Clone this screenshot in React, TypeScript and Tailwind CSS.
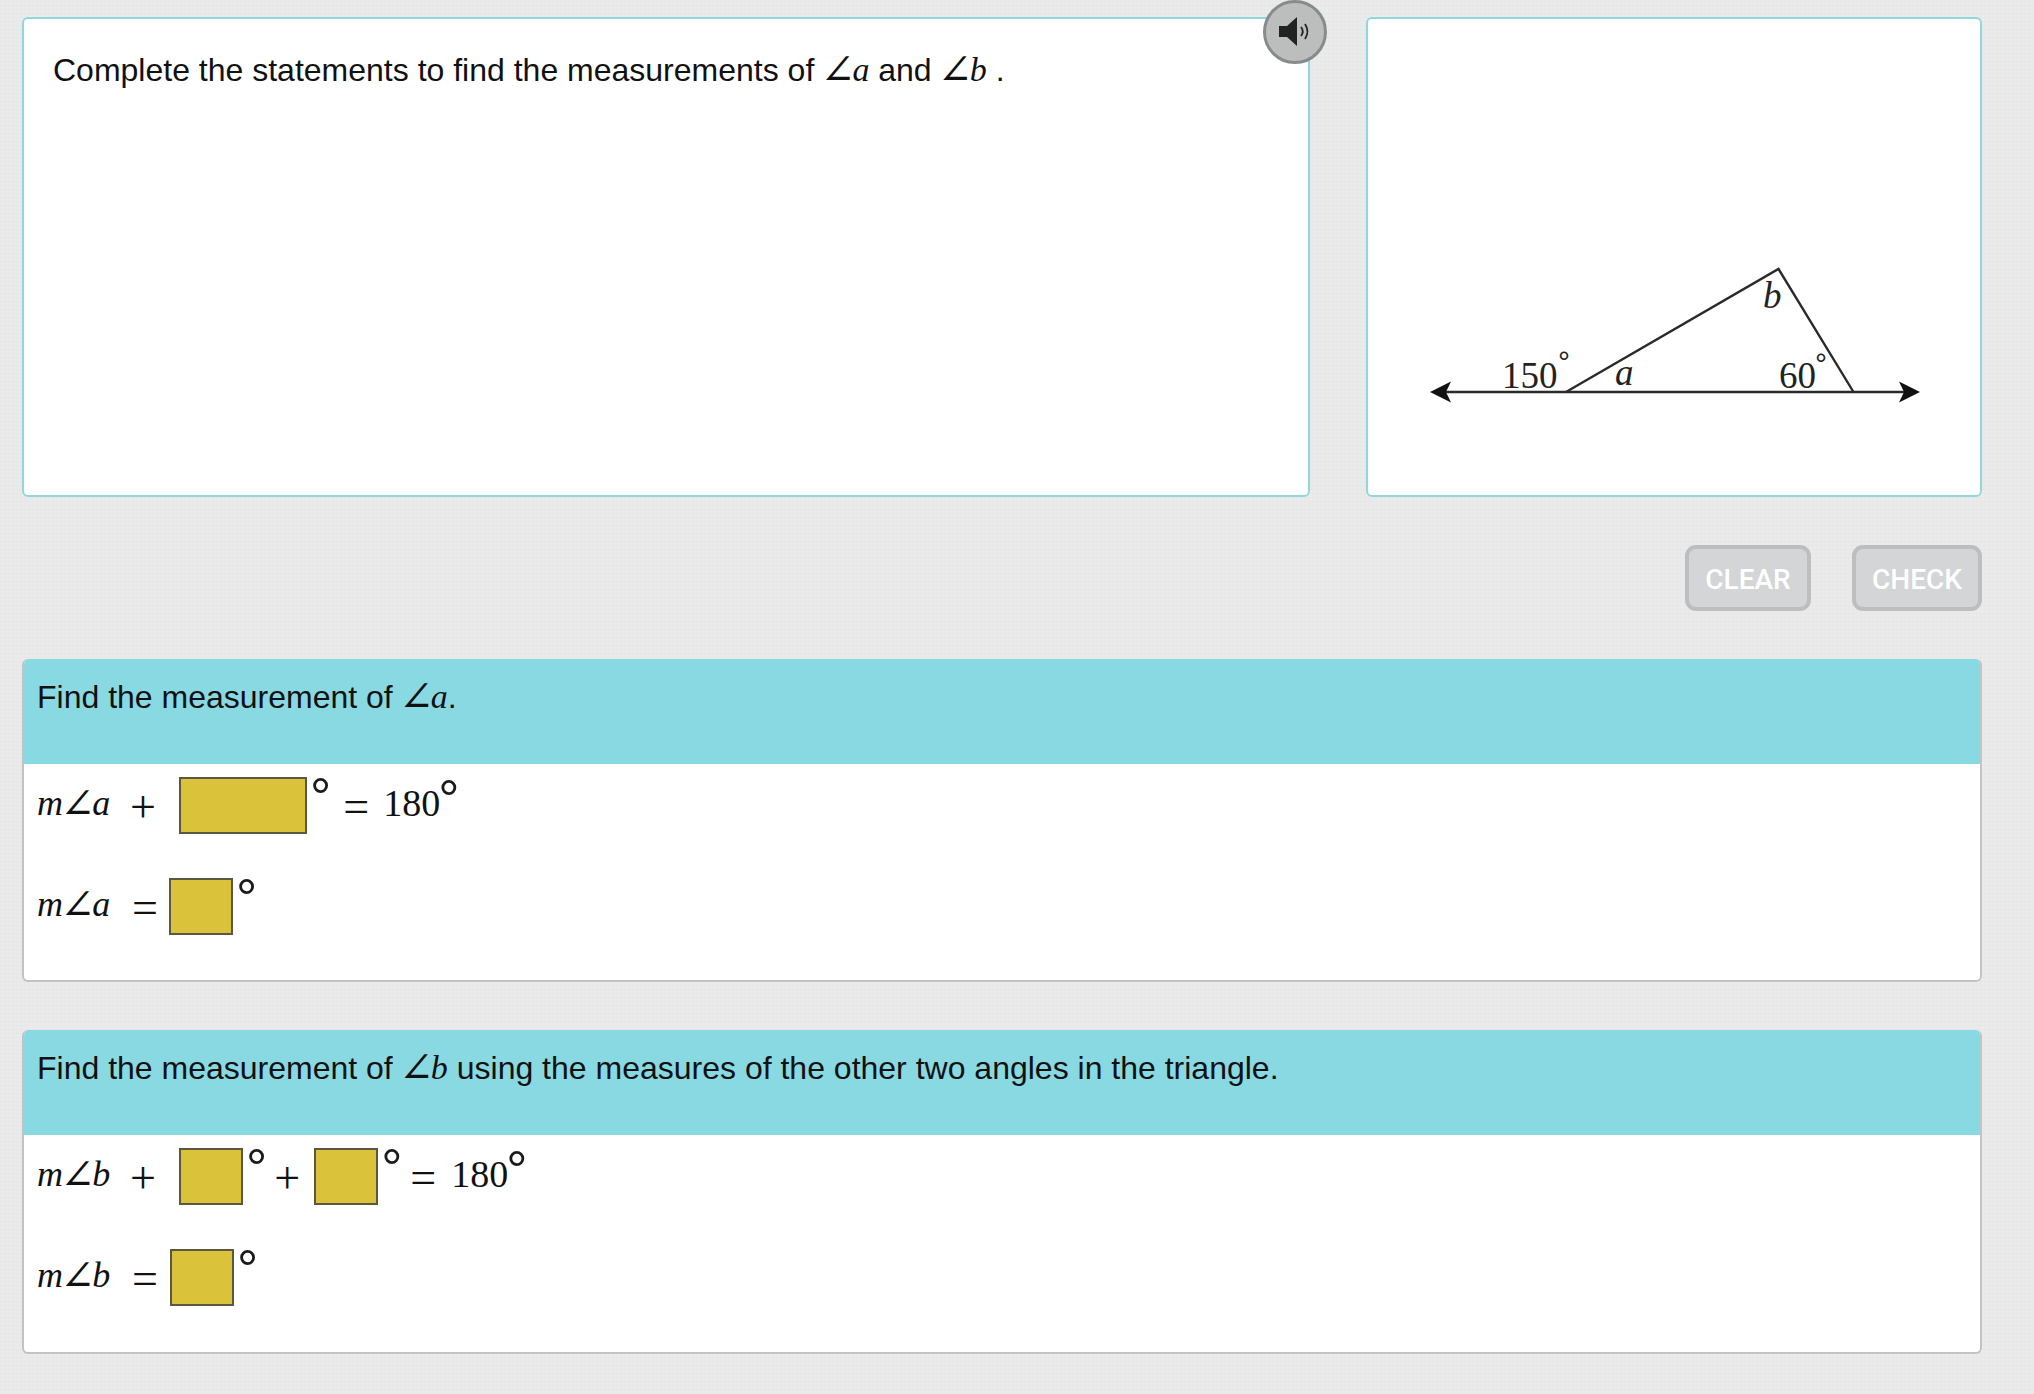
import React from "react";

const SANS = "font-['Liberation_Sans',Arial,sans-serif]";
const SERIF = "font-['Liberation_Serif','DejaVu_Serif',serif]";

function AngleGlyph() {
  return <span className="text-[42px] leading-[0] -mx-[3px] not-italic align-[-3px]">∠</span>;
}

function Ang({ v }: { v: string }) {
  return (
    <span className={`${SERIF} italic text-[34px]`}>
      <AngleGlyph />
      {v}
    </span>
  );
}

function Box({ w, ml = "" }: { w: string; ml?: string }) {
  return <div className={`${w} ${ml} h-[57px] shrink-0 border-2 border-[#5c5741] bg-[#dac33a]`} />;
}

function Deg({ ml = "ml-[3px]", mt = "-mt-[6px]" }: { ml?: string; mt?: string }) {
  return (
    <span className={`${ml} ${mt} ${SANS} self-start h-[53px] text-[53px] leading-[53px] text-[#1a1a1a] shrink-0`}>°</span>
  );
}

function MathName({ v }: { v: string }) {
  return (
    <span className={`${SERIF} italic text-[36px] leading-[57px] mb-[5px] text-[#111] w-[73px] shrink-0 whitespace-nowrap`}>
      m<AngleGlyph />
      {v}
    </span>
  );
}

function Op({ c, cls }: { c: string; cls: string }) {
  return <span className={`${SERIF} text-[46px] leading-[57px] mt-[1px] text-[#111] shrink-0 ${cls}`}>{c}</span>;
}

function Result({ ml }: { ml: string }) {
  return (
    <>
      <span className={`${ml} ${SERIF} text-[38px] leading-[57px] mb-[5px] text-[#111] whitespace-nowrap`}>180</span>
      <Deg ml="-ml-[2px]" mt="-mt-[4px]" />
    </>
  );
}

function Panel({ title, h, children }: { title: React.ReactNode; h: string; children: React.ReactNode }) {
  return (
    <section className={`overflow-hidden rounded-[6px] border-2 border-t-0 border-[#c3c3c3] bg-white ${h}`}>
      <div className={`-mx-[2px] h-[105px] bg-[#89d9e3] pl-[15px] pt-[18px] ${SANS} text-[32px] leading-[40px] text-[#111]`}>
        {title}
      </div>
      <div className="flex flex-col gap-[44px] pl-[13px] pt-[13px]">{children}</div>
    </section>
  );
}

function Diagram() {
  return (
    <svg width="500" height="145" viewBox="0 0 500 145" className="block text-[#222]">
      <line x1="12" y1="128" x2="488" y2="128" stroke="#2a2a2a" strokeWidth="2.4" />
      <path d="M5 128 L26 117.5 L21 128 L26 138.5 Z" fill="#111" />
      <path d="M495 128 L474 117.5 L479 128 L474 138.5 Z" fill="#111" />
      <path d="M141 128 L353.5 5 L428.5 128" fill="none" stroke="#2a2a2a" strokeWidth="2.4" />
      <text x="77" y="124" fontFamily="'Liberation Serif',serif" fontSize="37" fill="#222">150</text>
      <text x="133" y="108" fontFamily="'Liberation Sans',sans-serif" fontSize="30" fill="#222">°</text>
      <text x="354" y="124" fontFamily="'Liberation Serif',serif" fontSize="37" fill="#222">60</text>
      <text x="390" y="110" fontFamily="'Liberation Sans',sans-serif" fontSize="30" fill="#222">°</text>
      <text x="190" y="121" fontFamily="'Liberation Serif',serif" fontStyle="italic" fontSize="37" fill="#222">a</text>
      <text x="338" y="44" fontFamily="'Liberation Serif',serif" fontStyle="italic" fontSize="37" fill="#222">b</text>
    </svg>
  );
}

function SpeakerButton() {
  return (
    <button className="absolute -top-[19px] -right-[19px] flex h-[64px] w-[64px] items-center justify-center rounded-full border-[3px] border-[#878b8b] bg-[#bcbebe]">
      <svg width="34" height="32" viewBox="0 0 34 32">
        <path d="M1 10 H9 L19 1 V30 L9 21 H1 Z" fill="#222" />
        <path d="M23 11 Q26.5 15.5 23 20" fill="none" stroke="#222" strokeWidth="1.8" />
        <path d="M27 8 Q32 15.5 27 23" fill="none" stroke="#222" strokeWidth="1.8" />
      </svg>
    </button>
  );
}

function Btn({ children, w }: { children: React.ReactNode; w: string }) {
  return (
    <button className={`${w} h-[66px] rounded-[11px] border-[4px] border-[#bcbebf] bg-[#d3d5d6] pt-[3px] font-['Roboto',sans-serif] text-[28px] font-medium text-white`}>
      {children}
    </button>
  );
}

export default function App() {
  return (
    <div className="min-h-screen bg-[#ebebeb] bg-[image:repeating-linear-gradient(0deg,#e7e7e7_0px,#e7e7e7_1px,transparent_1px,transparent_4px),repeating-linear-gradient(90deg,#e8e8e8_0px,#e8e8e8_1px,transparent_1px,transparent_4px)] pl-[22px] pr-[52px] pt-[17px]">
      <div className="flex gap-[56px]">
        <div className={`relative h-[480px] w-[1288px] rounded-[6px] border-2 border-[#8fd8dc] bg-white pl-[29px] pt-[31px] ${SANS} text-[32px] leading-[40px] text-[#111]`}>
          Complete the statements to find the measurements of <Ang v="a" /> and <Ang v="b" /> .
          <SpeakerButton />
        </div>
        <div className="flex h-[480px] flex-1 items-end rounded-[6px] border-2 border-[#8fd8dc] bg-white pb-[86px] pl-[57px]">
          <Diagram />
        </div>
      </div>

      <div className="mt-[48px] flex justify-end gap-[41px]">
        <Btn w="w-[126px]">CLEAR</Btn>
        <Btn w="w-[130px]">CHECK</Btn>
      </div>

      <div className="mt-[48px] flex flex-col gap-[48px]">
        <Panel h="h-[323px]" title={<>Find the measurement of <Ang v="a" />.</>}>
          <div className="flex h-[57px] items-center">
            <MathName v="a" />
            <Op c="+" cls="ml-[20px] w-[49px]" />
            <Box w="w-[128px]" />
            <Deg />
            <Op c="=" cls="ml-[12px]" />
            <Result ml="ml-[14px]" />
          </div>
          <div className="flex h-[57px] items-center">
            <MathName v="a" />
            <Op c="=" cls="ml-[22px] w-[37px]" />
            <Box w="w-[64px]" />
            <Deg />
          </div>
        </Panel>
        <Panel h="h-[324px]" title={<>Find the measurement of <Ang v="b" /> using the measures of the other two angles in the triangle.</>}>
          <div className="flex h-[57px] items-center">
            <MathName v="b" />
            <Op c="+" cls="ml-[20px] w-[49px]" />
            <Box w="w-[64px]" />
            <Deg />
            <Op c="+" cls="ml-[7px]" />
            <Box w="w-[64px]" ml="ml-[14px]" />
            <Deg />
            <Op c="=" cls="ml-[8px]" />
            <Result ml="ml-[15px]" />
          </div>
          <div className="flex h-[57px] items-center">
            <MathName v="b" />
            <Op c="=" cls="ml-[22px] w-[38px]" />
            <Box w="w-[64px]" />
            <Deg />
          </div>
        </Panel>
      </div>
    </div>
  );
}
